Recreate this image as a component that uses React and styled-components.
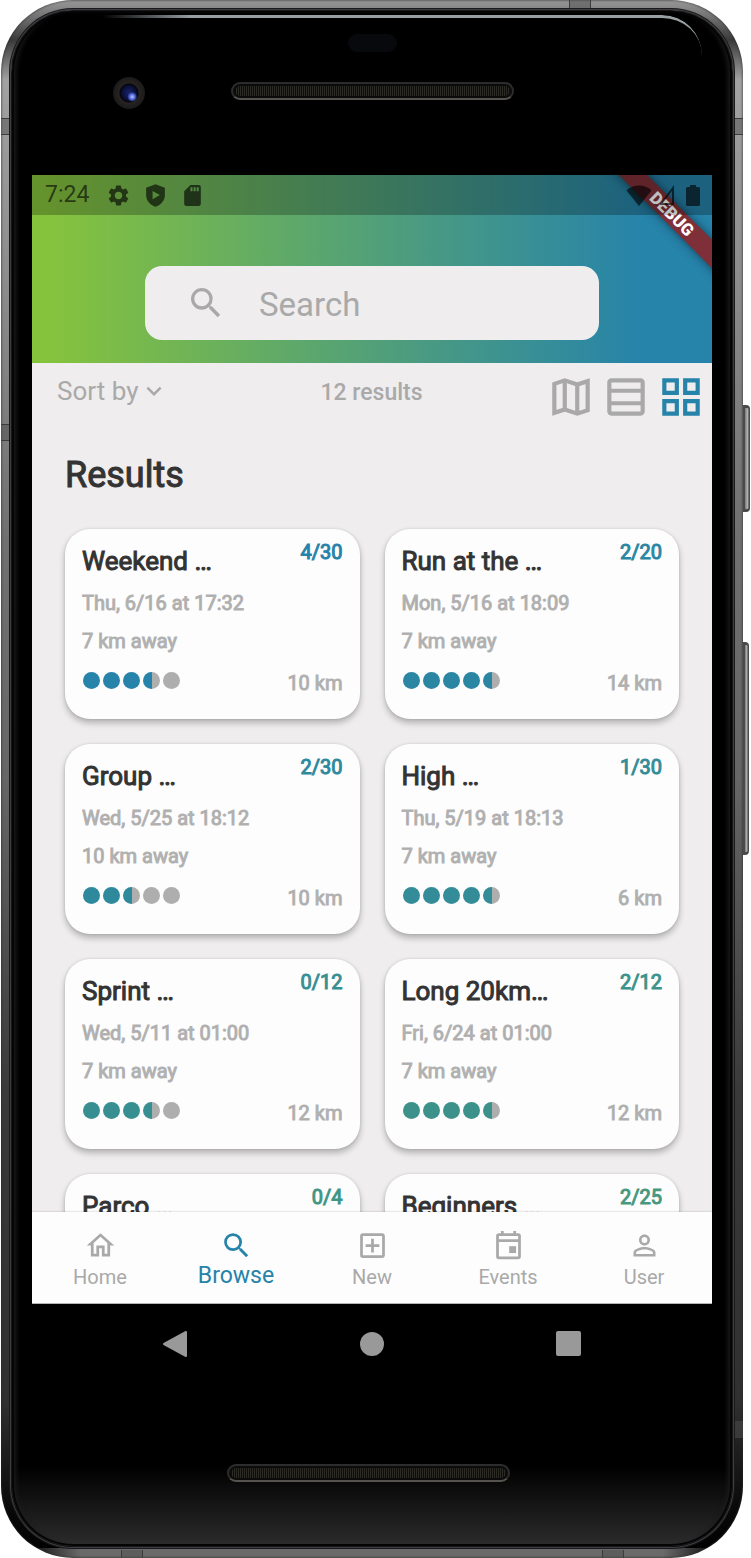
import React from "react";
import styled, { createGlobalStyle, css } from "styled-components";
import {
  MdSettings,
  MdSdCard,
  MdSearch,
  MdKeyboardArrowDown,
  MdOutlineTableRows,
  MdOutlineGridView,
  MdOutlineHome,
  MdOutlineAddBox,
  MdOutlinePersonOutline,
} from "react-icons/md";

const GlobalStyle = createGlobalStyle`
  *, *::before, *::after { box-sizing: border-box; }
  html, body { margin: 0; background: #fff; }
  body { font-family: Roboto, "Liberation Sans", sans-serif; color: #333; }
  button, input, select { font: inherit; color: inherit; border: 0; background: none; padding: 0; margin: 0; }
  button, select { cursor: pointer; }
  h1, h2, p { margin: 0; font-weight: 400; }
`;

const BLUE = "#2683aa";
const GREY = "#a9a9a9";

const heavy = css`
  font-weight: 400;
  -webkit-text-stroke: 1px currentColor;
`;

/* ---------- Device ---------- */

const Page = styled.div`
  height: 100vh;
  min-height: 900px;
  padding: 0 8px 0 1px;
`;

const Phone = styled.div`
  position: relative;
  height: 100%;
  display: flex;
  border-radius: 72px;
  padding: 10px 10px 11px;
  background: linear-gradient(90deg, #000 20px, #6a6a6a 80px, #6a6a6a calc(100% - 80px), #000 calc(100% - 20px))
      bottom / 100% 10px no-repeat,
    linear-gradient(
      180deg,
      #9a9a9a 0,
      #3a3a3a 40px,
      #a2a2a2 80px,
      #999 160px,
      #707070 35%,
      #666 50%,
      #3a3a3a 70%,
      #303030 90%,
      #080808 97%,
      #000 100%
    );
  box-shadow: inset 0 0 2px 1px rgba(40, 40, 40, 0.5);
`;

const Glass = styled.div`
  position: relative;
  flex: 1;
  min-width: 0;
  display: flex;
  flex-direction: column;
  padding: 0 20px;
  border-radius: 62px;
  background: linear-gradient(180deg, #000 0, #000 calc(100% - 80px), #2c2c2c 100%);
  border: 1px solid #17171a;
  box-shadow: 0 0 0 1px #3e3e42, 0 0 0 2px #1a1a1c, inset 0 0 0 2px #050505,
    inset 8px 0 5px -4px #1c1c1c, inset -8px 0 5px -4px #1c1c1c;

  &::before {
    content: "";
    position: absolute;
    top: 4px;
    left: 90px;
    right: 30px;
    height: 40px;
    border-top: 3px solid #98a0a4;
    border-top-right-radius: 46px;
    mask-image: linear-gradient(90deg, transparent, #000 15%);
  }
`;

const SideKey = styled.span`
  position: absolute;
  left: 100%;
  top: ${(p) => p.$top};
  height: ${(p) => p.$height};
  width: ${(p) => p.$width}px;
  border: solid #4a4a4a;
  border-width: 3px 1px 3px 2px;
  border-radius: 0 4px 4px 0;
  background: linear-gradient(90deg, #777, #b4b4b4 60%, #555);
`;

const Band = styled.span`
  position: absolute;
  background: rgba(80, 80, 80, 0.5);
  border: solid #3c3c3c;
  ${(p) =>
    p.$edge === "left" || p.$edge === "right"
      ? css`
          ${p.$edge}: 0;
          top: ${p.$at};
          width: 9px;
          height: 17px;
          border-width: 1px 0;
        `
      : css`
          ${p.$edge}: 0;
          left: ${p.$at};
          width: 22px;
          height: 8px;
          border-width: 0 1px;
        `}
`;

const Forehead = styled.div`
  flex: none;
  height: 164px;
  padding-top: 23px;
  display: flex;
  flex-direction: column;
  align-items: center;
  gap: 21px;
`;

const Sensor = styled.div`
  width: 49px;
  height: 18px;
  border-radius: 9px;
  background: #08090d;
`;

const ForeheadRow = styled.div`
  width: 100%;
  display: grid;
  grid-template-columns: 1fr auto 1fr;
  align-items: center;
`;

const Camera = styled.div`
  width: 32px;
  height: 32px;
  margin-top: 4px;
  margin-left: 41%;
  border-radius: 50%;
  background: radial-gradient(circle at 60% 62%, #b9c4ff 0, #4a5fd0 3px, transparent 5px),
    radial-gradient(circle, #18246e 0, #0a0f35 7px, #050509 9px, #262322 10px, #1c1a1a 16px);
`;

const Speaker = styled.div`
  width: 283px;
  height: 18px;
  border-radius: 9px;
  border: 2px solid #2c2c2c;
  border-bottom-color: #56534e;
  background: repeating-linear-gradient(90deg, #0f0e0c 0 1px, #2c2a24 1px 2px);
  box-shadow: inset 0 0 0 2px #0b0b0b;
`;

const Chin = styled.div`
  flex: none;
  height: 242px;
  display: flex;
  flex-direction: column;
  align-items: center;
  gap: 80px;

  ${Speaker} {
    margin-right: 8px;
  }
`;

const SystemNav = styled.nav`
  width: 100%;
  height: 80px;
  display: flex;
  justify-content: center;
`;

const SystemButton = styled.button`
  width: 29%;
  display: flex;
  align-items: center;
  justify-content: center;
`;

/* ---------- App screen ---------- */

const Screen = styled.main`
  position: relative;
  flex: 1;
  min-height: 0;
  display: flex;
  flex-direction: column;
  overflow: hidden;
  background: #efedee;
`;

const Header = styled.header`
  flex: none;
  padding-bottom: 23px;
  background: linear-gradient(90deg, #86c33c 2%, ${BLUE} 90%);
`;

const StatusBar = styled.div`
  position: relative;
  z-index: 2;
  height: 40px;
  margin-bottom: 51px;
  padding: 0 12px 0 13px;
  display: flex;
  align-items: center;
  justify-content: space-between;
  background: rgba(0, 0, 0, 0.25);
  color: rgba(0, 0, 0, 0.62);
`;

const StatusGroup = styled.div`
  display: flex;
  align-items: center;
  gap: ${(p) => p.$gap}px;
`;

const Clock = styled.span`
  font-size: 23px;
  line-height: 42px;
  margin-right: 5px;
`;

const DebugRibbon = styled.div`
  position: absolute;
  z-index: 1;
  top: 29px;
  right: -40px;
  width: 160px;
  height: 20px;
  transform: rotate(45deg);
  background: #7f2f38;
  box-shadow: 0 0 10px rgba(0, 0, 0, 0.5);
  color: #fff;
  font-size: 17px;
  font-weight: 900;
  line-height: 20px;
  text-align: center;
`;

const SearchBox = styled.label`
  height: 74px;
  margin: 0 113px;
  padding-left: 41px;
  display: flex;
  align-items: center;
  gap: 33px;
  border-radius: 17px;
  background: #efedee;
  color: ${GREY};
`;

const SearchInput = styled.input`
  flex: 1;
  min-width: 0;
  height: 42px;
  padding-top: 2px;
  font-size: 33px;
  outline: none;
  &::placeholder { color: ${GREY}; opacity: 1; }
`;

const Toolbar = styled.div`
  flex: none;
  padding: 9px 6px 0 25px;
  display: grid;
  grid-template-columns: minmax(0, 1fr) auto minmax(0, 1fr);
  align-items: start;
  color: ${GREY};
`;

const SortLabel = styled.label`
  display: flex;
  align-items: center;
`;

const SortSelect = styled.select`
  appearance: none;
  height: 38px;
  font-size: 26px;
  outline: none;
`;

const Count = styled.p`
  font-size: 23px;
  font-weight: 500;
  line-height: 42px;
  padding-right: 20px;
`;

const Views = styled.div`
  display: flex;
  justify-content: flex-end;
  gap: 5px;
`;

const ViewButton = styled.button`
  height: 50px;
  line-height: 0;
  color: ${(p) => (p.$active ? BLUE : GREY)};
`;

const Results = styled.section`
  flex: 1;
  min-height: 0;
  overflow: hidden;
  padding: 31px 33px 0;
`;

const Heading = styled.h1`
  ${heavy}
  font-size: 36px;
  line-height: 44px;
  margin-bottom: 32px;
`;

const CardGrid = styled.div`
  display: grid;
  grid-template-columns: 1fr 1fr;
  gap: 25px;
`;

const Card = styled.article`
  padding: 9px 17px 18px;
  border-radius: 25px;
  background: #fdfdfd;
  box-shadow: 0 4px 6px rgba(0, 0, 0, 0.25), 0 0 3px rgba(0, 0, 0, 0.12);
  ${heavy}
`;

const CardRow = styled.div`
  display: flex;
  align-items: ${(p) => p.$align};
  justify-content: space-between;
`;

const CardTitle = styled.h2`
  font-size: 26px;
  line-height: 46px;
  color: #333;
  white-space: nowrap;
`;

const Places = styled.span`
  font-size: 20px;
  line-height: 28px;
  color: ${(p) => p.$tint};
`;

const Info = styled.p`
  font-size: 20px;
  line-height: 38px;
  color: ${GREY};
  -webkit-text-stroke-color: #b3b3b3;
`;

const Distance = styled(Info)`
  line-height: 46px;
  height: 41px;
`;

const Dots = styled.div`
  display: flex;
  gap: 3px;
  padding-left: 1px;
`;

const fills = {
  full: (tint) => tint,
  half: (tint) => `linear-gradient(90deg, ${tint} 50%, #aeaeae 50%)`,
  none: () => "#aeaeae",
};

const Dot = styled.span`
  width: 17px;
  height: 17px;
  border-radius: 50%;
  background: ${(p) => fills[p.$fill](p.$tint)};
`;

const TabBar = styled.nav`
  flex: none;
  height: 92px;
  display: grid;
  grid-template-columns: repeat(5, 1fr);
  background: #fdfdfd;
  border-bottom: 1px solid #b5b5b5;
  box-shadow: 0 0 2px rgba(0, 0, 0, 0.25);
  position: relative;
`;

const Tab = styled.a`
  padding-top: 17px;
  display: flex;
  flex-direction: column;
  align-items: center;
  text-decoration: none;
  font-size: ${(p) => (p.$active ? 23 : 20)}px;
  line-height: ${(p) => (p.$active ? 28 : 30)}px;
  color: ${(p) => (p.$active ? BLUE : GREY)};
`;

/* ---------- Drawings ---------- */

const ShieldIcon = () => (
  <svg width="25" height="25" viewBox="0 0 24 24" fill="currentColor" aria-hidden="true">
    <path
      fillRule="evenodd"
      d="M12 1.2 3 4.6v6.8c0 5.3 3.8 9.6 9 11.4 5.2-1.800 9-6.100 9-11.400V4.600zM9.200 7.600v8l7-4z"
    />
  </svg>
);

const WifiIcon = () => (
  <svg width="26" height="21" viewBox="0 0 26 21" fill="currentColor" aria-hidden="true">
    <path d="M13 21 .5 5.500C4 2 8 .5 13 .5S22 2 25.500 5.500z" />
  </svg>
);

const SignalIcon = () => (
  <svg width="18" height="21" viewBox="0 0 18 21" fill="none" stroke="currentColor" strokeWidth="2" aria-hidden="true">
    <path d="M13 3v16H1z" />
  </svg>
);

const BatteryIcon = () => (
  <svg width="14" height="21" viewBox="0 0 14 21" fill="currentColor" aria-hidden="true">
    <path d="M4 0h6v2h2.500q1.500 0 1.500 1.500v16q0 1.500-1.500 1.500h-11Q0 21 0 19.500v-16Q0 2 1.500 2H4z" />
  </svg>
);

const MapIcon = () => (
  <svg width="50" height="50" viewBox="0 0 24 24" fill="none" stroke="currentColor" strokeWidth="2" aria-hidden="true">
    <path d="M4 5.700 9 4l6 2 5-1.600v14L15 20l-6-2-5 1.600zM9 4v14M15 6v14" />
  </svg>
);

const EventIcon = () => (
  <svg width="33" height="33" viewBox="0 0 24 24" fill="none" stroke="currentColor" strokeWidth="2" aria-hidden="true">
    <rect x="4" y="4" width="16" height="17" rx="1" />
    <path d="M4 8.500h16M7.500 1.500V4M16.500 1.500V4" />
    <rect x="12.500" y="12.500" width="5" height="5" fill="currentColor" stroke="none" />
  </svg>
);

const BackIcon = () => (
  <svg width="26" height="28" viewBox="0 0 26 28" fill="#999" stroke="#999" strokeWidth="2" strokeLinejoin="round" aria-hidden="true">
    <path d="M24 2v24L2 14z" />
  </svg>
);

const HomeIcon = () => (
  <svg width="26" height="26" viewBox="0 0 26 26" fill="#999" aria-hidden="true">
    <circle cx="13" cy="13" r="12" />
  </svg>
);

const RecentsIcon = () => (
  <svg width="26" height="26" viewBox="0 0 26 26" fill="#999" aria-hidden="true">
    <rect x="0" y="0" width="25" height="25" rx="2" />
  </svg>
);

/* ---------- Data ---------- */

const events = [
  { title: "Weekend …", places: "4/30", date: "Thu, 6/16 at 17:32", away: "7 km away", level: 3.5, length: "10 km", tint: "#2683aa" },
  { title: "Run at the …", places: "2/20", date: "Mon, 5/16 at 18:09", away: "7 km away", level: 4.5, length: "14 km", tint: "#2a86a3" },
  { title: "Group …", places: "2/30", date: "Wed, 5/25 at 18:12", away: "10 km away", level: 2.5, length: "10 km", tint: "#2e899d" },
  { title: "High …", places: "1/30", date: "Thu, 5/19 at 18:13", away: "7 km away", level: 4.5, length: "6 km", tint: "#338c97" },
  { title: "Sprint …", places: "0/12", date: "Wed, 5/11 at 01:00", away: "7 km away", level: 3.5, length: "12 km", tint: "#388f91" },
  { title: "Long 20km…", places: "2/12", date: "Fri, 6/24 at 01:00", away: "7 km away", level: 4.5, length: "12 km", tint: "#3c928b" },
  { title: "Parco …", places: "0/4", tint: "#419585" },
  { title: "Beginners …", places: "2/25", tint: "#46987f" },
];

const tabs = [
  { label: "Home", icon: <MdOutlineHome size={33} /> },
  { label: "Browse", icon: <MdSearch size={33} />, active: true },
  { label: "New", icon: <MdOutlineAddBox size={33} /> },
  { label: "Events", icon: <EventIcon /> },
  { label: "User", icon: <MdOutlinePersonOutline size={33} /> },
];

const fillAt = (level, i) => (level >= i + 1 ? "full" : level > i ? "half" : "none");

const EventCard = ({ title, places, date, away, level, length, tint }) => (
  <Card>
    <CardRow $align="flex-start">
      <CardTitle>{title}</CardTitle>
      <Places $tint={tint}>{places}</Places>
    </CardRow>
    {date && (
      <>
        <Info>{date}</Info>
        <Info>{away}</Info>
        <CardRow $align="center">
          <Dots role="img" aria-label={`Difficulty ${level} of 5`}>
            {[0, 1, 2, 3, 4].map((i) => (
              <Dot key={i} $fill={fillAt(level, i)} $tint={tint} />
            ))}
          </Dots>
          <Distance>{length}</Distance>
        </CardRow>
      </>
    )}
  </Card>
);

export default function App() {
  return (
    <Page>
      <GlobalStyle />
      <Phone>
        <SideKey $top="26%" $height="107px" $width={7} />
        <SideKey $top="41.2%" $height="213px" $width={6} />
        <Band $edge="left" $at="118px" />
        <Band $edge="right" $at="118px" />
        <Band $edge="left" $at="424px" />
        <Band $edge="right" $at="91.2%" />
        <Band $edge="top" $at="76.5%" />
        <Band $edge="bottom" $at="16.2%" />
        <Band $edge="bottom" $at="81%" />
        <Glass>
          <Forehead>
            <Sensor />
            <ForeheadRow>
              <Camera />
              <Speaker />
            </ForeheadRow>
          </Forehead>

          <Screen>
            <Header>
              <StatusBar>
                <StatusGroup $gap={12}>
                  <Clock>7:24</Clock>
                  <MdSettings size={25} />
                  <ShieldIcon />
                  <MdSdCard size={25} />
                </StatusGroup>
                <StatusGroup $gap={8}>
                  <WifiIcon />
                  <SignalIcon />
                  <BatteryIcon />
                </StatusGroup>
              </StatusBar>
              <SearchBox>
                <MdSearch size={40} />
                <SearchInput type="search" placeholder="Search" aria-label="Search" />
              </SearchBox>
            </Header>
            <DebugRibbon>DEBUG</DebugRibbon>

            <Toolbar>
              <SortLabel>
                <SortSelect aria-label="Sort by" defaultValue="">
                  <option value="">Sort by</option>
                  <option value="date">Date</option>
                  <option value="length">Length</option>
                </SortSelect>
                <MdKeyboardArrowDown size={30} />
              </SortLabel>
              <Count>12 results</Count>
              <Views>
                <ViewButton aria-label="Map view"><MapIcon /></ViewButton>
                <ViewButton aria-label="List view"><MdOutlineTableRows size={50} /></ViewButton>
                <ViewButton aria-label="Grid view" $active><MdOutlineGridView size={50} /></ViewButton>
              </Views>
            </Toolbar>

            <Results>
              <Heading>Results</Heading>
              <CardGrid>
                {events.map((event) => (
                  <EventCard key={event.title} {...event} />
                ))}
              </CardGrid>
            </Results>

            <TabBar>
              {tabs.map(({ label, icon, active }) => (
                <Tab key={label} href="#" $active={active}>
                  {icon}
                  {label}
                </Tab>
              ))}
            </TabBar>
          </Screen>

          <Chin>
            <SystemNav>
              <SystemButton aria-label="Back"><BackIcon /></SystemButton>
              <SystemButton aria-label="Home"><HomeIcon /></SystemButton>
              <SystemButton aria-label="Recent apps"><RecentsIcon /></SystemButton>
            </SystemNav>
            <Speaker />
          </Chin>
        </Glass>
      </Phone>
    </Page>
  );
}
